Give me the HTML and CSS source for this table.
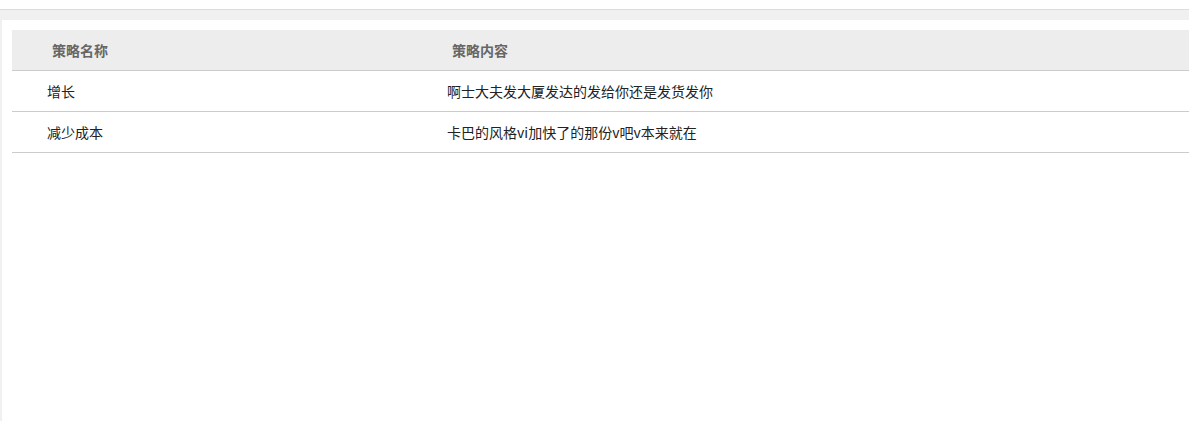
FILE: index.html
```html
<!DOCTYPE html>
<html lang="zh">
<head>
<meta charset="utf-8">
<title>策略</title>
<link rel="stylesheet" href="styles.css">
</head>
<body>
<div class="topbar"></div>
<div class="shell">
  <div class="panel">
    <table class="grid">
      <thead>
        <tr><th class="c1">策略名称</th><th>策略内容</th></tr>
      </thead>
      <tbody>
        <tr><td class="c1">增长</td><td>啊士大夫发大厦发达的发给你还是发货发你</td></tr>
        <tr><td class="c1">减少成本</td><td>卡巴的风格vi加快了的那份v吧v本来就在</td></tr>
      </tbody>
    </table>
  </div>
</div>
</body>
</html>
```

FILE: styles.css
```css
html, body {
  margin: 0;
  padding: 0;
  height: 100%;
  background: #ffffff;
  font-family: "Noto Sans CJK SC", "Microsoft YaHei", sans-serif;
  font-size: 14px;
}
.topbar {
  height: 9px;
  background: #ffffff;
  border-bottom: 1px solid #dddddd;
}
.shell {
  background: #f0f0f0;
  padding: 10px 0 0 2px;
  height: calc(100% - 20px);
}
.panel {
  background: #ffffff;
  padding: 10px 0 0 10px;
  height: 100%;
  box-sizing: border-box;
}
.grid {
  width: 100%;
  border-collapse: collapse;
  table-layout: fixed;
}
.grid .c1 {
  width: 400px;
}
.grid th {
  height: 40px;
  padding: 0 0 0 40px;
  background: #ededed;
  color: #666666;
  font-weight: bold;
  text-align: left;
  border-bottom: 1px solid #cccccc;
  box-sizing: border-box;
  line-height: 20px;
}
.grid td {
  height: 41px;
  padding: 0 0 0 35px;
  color: #222222;
  text-align: left;
  border-bottom: 1px solid #cccccc;
  box-sizing: border-box;
  line-height: 20px;
}
```
